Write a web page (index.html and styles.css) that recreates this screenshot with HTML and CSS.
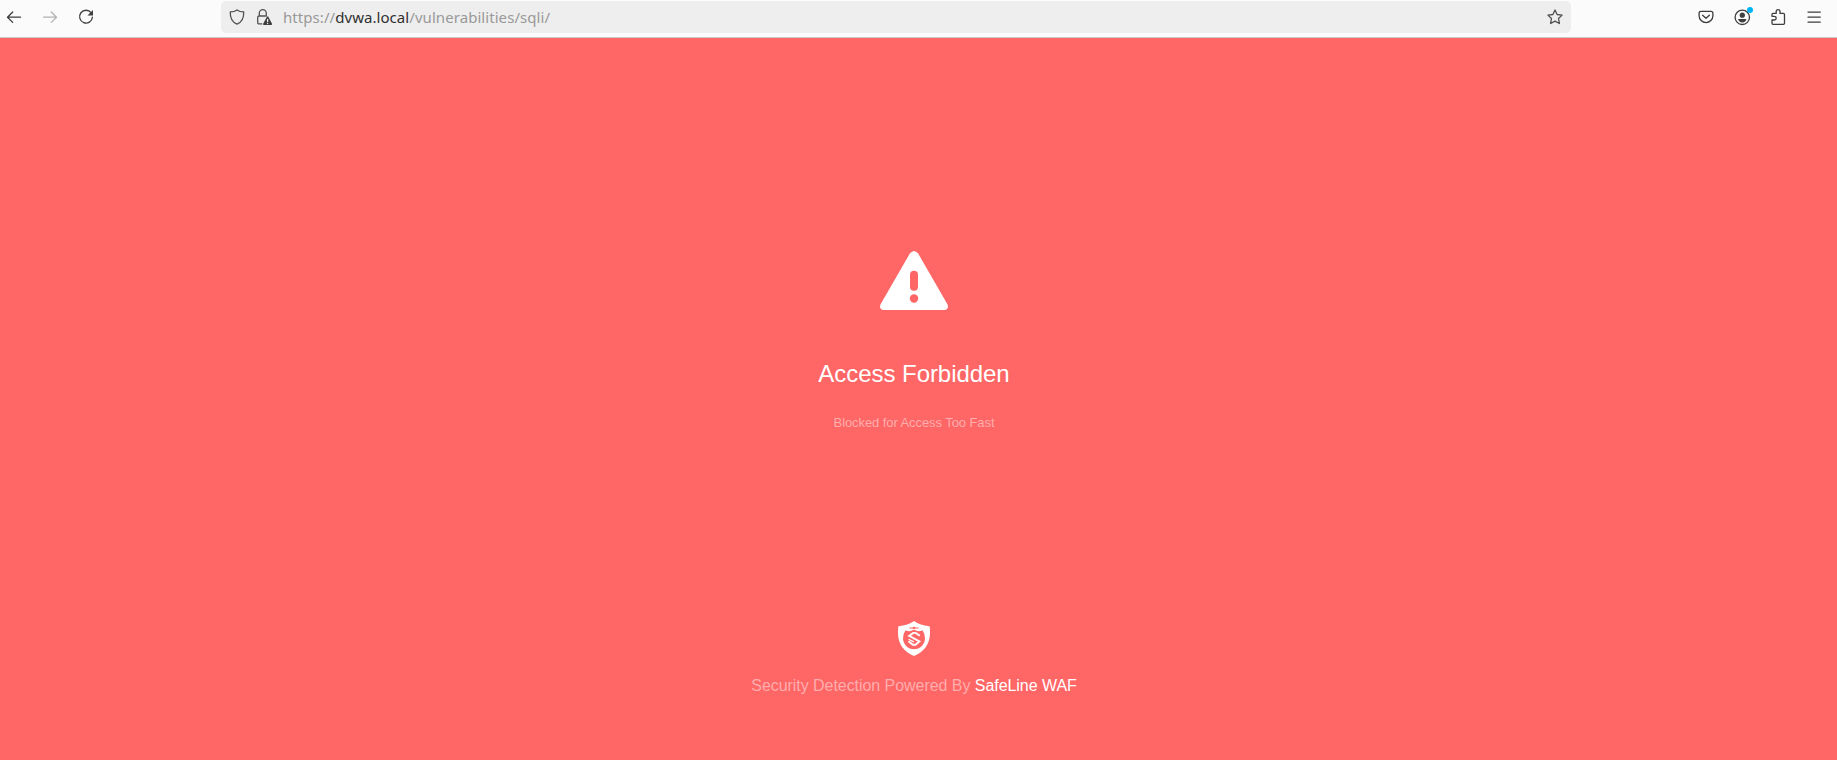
FILE: index.html
```html
<!DOCTYPE html>
<html lang="en">
<head>
<meta charset="utf-8">
<title>Access Forbidden</title>
<link rel="stylesheet" href="styles.css">
</head>
<body>
<header class="toolbar">
  <nav class="nav">
    <svg class="icon" viewBox="0 0 16 16"><path d="M14.500 8.200H1.500M6.700 3 1.500 8.200l5.200 5.200"/></svg>
    <svg class="icon disabled" viewBox="0 0 16 16"><path d="M1.500 8.200h13M9.300 3l5.200 5.200-5.200 5.200"/></svg>
    <svg class="icon" viewBox="0 0 16 16"><path d="M13.200 3.900A6.400 6.400 0 1 0 14.400 8.200"/><path class="solid" d="M15 1v5.500H9.500z"/></svg>
  </nav>
  <div class="address">
    <svg class="icon shield" viewBox="0 0 16 16"><path d="M8 .9C6.300 2.200 3.500 2.900 1.300 2.900 1 8.800 3.300 13.200 8 15.200c4.700-2 7-6.400 6.700-12.300C12.500 2.900 9.700 2.200 8 .9z"/></svg>
    <svg class="icon lock" viewBox="0 0 16 16"><path d="M5.800 14.900H3.200Q1.700 14.900 1.700 13.400V8.500Q1.700 7 3.200 7h6.100M3.300 7V4.200a3.500 3.500 0 0 1 7 0V7"/><path class="solid" d="M10.900 7.700q.7-1 1.400 0l3.700 7.100q.4 1-.7 1.100H7.900q-1.100-.1-.7-1.100z"/><path class="mark" d="M11.600 10.300v2.300M11.600 14.300v.2"/></svg>
    <div class="url"><span class="scheme">https://</span><span class="host">dvwa.local</span><span class="path">/vulnerabilities/sqli/</span></div>
    <svg class="icon star" viewBox="0 0 16 16"><path d="m8 1 2.100 4.500 5 .6-3.600 3.400.9 5L8 12.100l-4.400 2.400.9-5L.9 6.100l5-.6z"/></svg>
  </div>
  <div class="actions">
    <svg class="icon" viewBox="0 0 16 16"><path d="M3 2.300h10q1.900 0 1.900 1.900v2.500a6.900 6.900 0 0 1-13.800 0V4.200q0-1.900 1.900-1.900z"/><path d="m4.600 6.200 3.400 3 3.400-3"/></svg>
    <div class="account">
      <svg class="icon" viewBox="0 0 16 16"><circle cx="8.300" cy="8.300" r="7.200"/><circle class="solid" cx="8.300" cy="6.200" r="2.600"/><path class="solid" d="M4.100 10h8.400q-.8 3.400-4.200 3.400T4.100 10z"/></svg>
      <span class="badge"></span>
    </div>
    <svg class="icon" viewBox="0 0 16 16"><path d="M2 7.300V5.500q0-1.100 1-1.100h3.200V2.600a1.900 1.900 0 0 1 3.800 0v1.800h3.400q1.100 0 1.100 1.100v8.700q0 1.100-1.100 1.100H3q-1 0-1-1v-3.300h2.400a1.800 1.800 0 0 0 0-3.600z"/></svg>
    <svg class="icon" viewBox="0 0 16 16"><path d="M2 3.100h12.300M2 8.100h12.300M2 13.100h12.300"/></svg>
  </div>
</header>
<main class="page">
  <svg class="warning" viewBox="0 0 68 59"><path fill="#fff" d="M29.800 2.600Q34-2.400 38.200 2.600L67.400 53.200Q69.200 58.300 65 59H3Q-1.200 58.300.6 53.200z"/><path stroke="#f66" stroke-width="8" stroke-linecap="round" d="M34 23.800v12"/><circle cx="34" cy="47.500" r="4.200" fill="#f66"/></svg>
  <h1 class="title">Access Forbidden</h1>
  <p class="reason">Blocked for Access Too Fast</p>
  <svg class="logo" viewBox="0 0 32 35"><path fill="#fff" d="M16 0q6 4.500 15.500 5.200Q32 6 32 12c0 11-6 19-16 23C6 31 0 23 0 12Q0 6 .5 5.200 10 4.500 16 0z"/><path fill="#f66" d="M7.500 9.300q3.500 1.600 6.500.2L16 8.700l2 .8q3 1.400 6.500-.2Q27 13 27 17.300a11 11 0 0 1-22 0Q5 13 7.500 9.300z"/><path fill="#f66" d="M11.500 6.600h3L16 5.600l1.500 1h3v1h-3l-1.500.7-1.500-.7h-3z"/><path fill="none" stroke="#fff" stroke-width="1.900" d="m21.800 14.800-4.200-2.900h-2.400l-4 3 10.200 5.500-3.900 3.300h-2.700L10.500 20.300"/><path fill="none" stroke="#fff" stroke-width="1.200" d="m10.500 18.300 5.300 2.600"/></svg>
  <p class="powered">Security Detection Powered By <span class="brand">SafeLine WAF</span></p>
</main>
</body>
</html>
```
FILE: styles.css
```css
* { box-sizing: border-box; }
body {
  margin: 0;
  height: 760px;
  overflow: hidden;
  display: flex;
  flex-direction: column;
  background: #ff6666;
  font-family: "Liberation Sans", Arial, sans-serif;
}
.toolbar {
  height: 38px;
  flex: none;
  display: flex;
  background: #fbfbfb;
  border-bottom: 1px solid #c8c8c8;
}
.icon {
  display: block;
  flex: none;
  width: 16px;
  height: 16px;
  fill: none;
  stroke: #3e3e3e;
  stroke-width: 1.3;
  stroke-linecap: round;
  stroke-linejoin: round;
}
.icon .solid { fill: #3e3e3e; stroke: none; }
.icon .mark { stroke: #eee; }
.icon.disabled { stroke: #b2b2b2; }
.nav {
  width: 221px;
  flex: none;
  display: flex;
  gap: 20px;
  padding: 9px 0 0 6px;
}
.address {
  width: 1350px;
  height: 32px;
  margin-top: 1px;
  flex: none;
  display: flex;
  align-items: center;
  padding: 0 8px;
  border-radius: 5px;
  background: #eeeeee;
}
.address .icon { stroke: #505050; }
.address .icon .solid { stroke: none; }
.address .lock { margin-left: 11px; }
.url {
  flex: 1;
  display: flex;
  margin-left: 11px;
  font: 15px/24px "Noto Sans", sans-serif;
  letter-spacing: 0.06px;
  color: #999;
  white-space: pre;
}
.host { color: #303030; }
.actions {
  display: flex;
  gap: 20px;
  padding: 9px 0 0 127px;
}
.account { position: relative; }
.account .icon { overflow: visible; }
.badge {
  position: absolute;
  top: -2px;
  right: -3px;
  width: 6px;
  height: 6px;
  border-radius: 50%;
  background: #00b3f4;
}
.page {
  width: 1828px;
  flex: 1;
  display: flex;
  flex-direction: column;
  align-items: center;
  padding-top: 213px;
}
.warning { width: 68px; height: 59px; fill: none; }
.title {
  margin: 50px 0 0;
  font-size: 24px;
  font-weight: 400;
  line-height: 28px;
  letter-spacing: -0.05px;
  color: #fff;
}
.reason {
  margin: 27px 0 0;
  font-size: 13px;
  line-height: 16px;
  letter-spacing: -0.08px;
  color: #ffadad;
}
.logo { width: 32px; height: 35px; margin-top: 190px; }
.powered {
  margin: 20px 0 0;
  font-size: 16px;
  line-height: 20px;
  letter-spacing: -0.05px;
  color: #ffadad;
}
.brand { color: #fff; }
```
